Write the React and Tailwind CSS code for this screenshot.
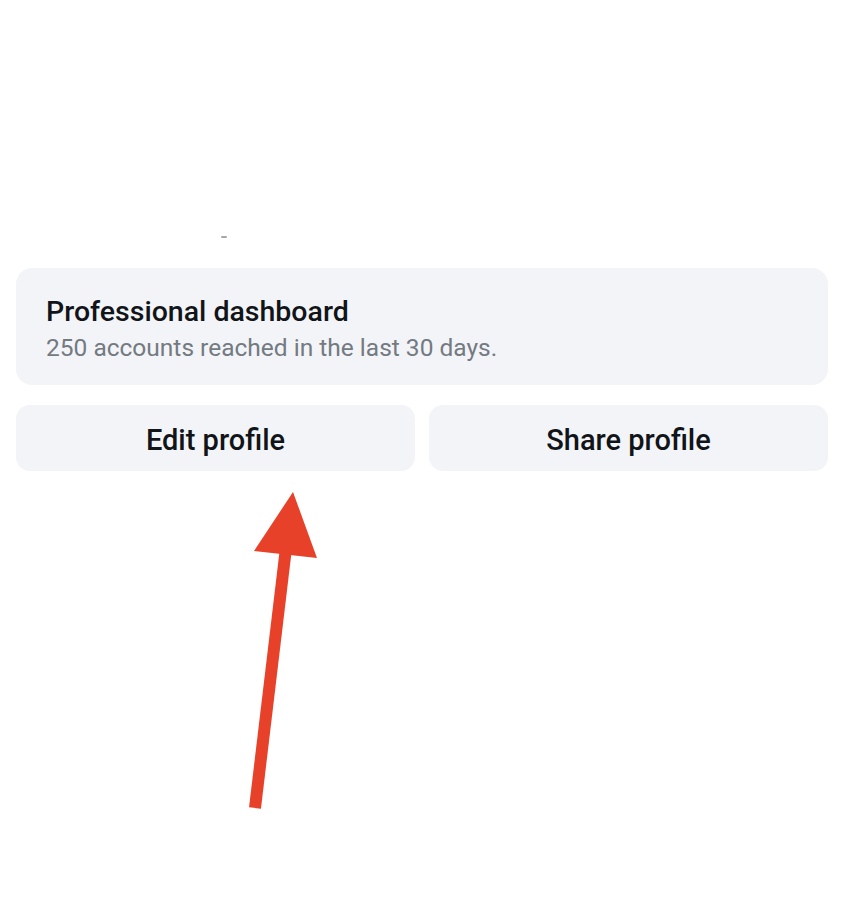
const font = { fontFamily: "Roboto, 'Noto Sans', sans-serif" };

export default function App() {
  return (
    <div className="w-[854px] h-[923px] bg-white relative" style={font}>
      <div className="h-[268px] relative">
        <span className="absolute left-[221px] top-[236px] w-[6px] h-[2px] bg-[#a4a9ae] rounded-full" />
      </div>
      <div className="pl-4 pr-[26px] flex flex-col gap-5">
        <div className="bg-[#f3f4f7] rounded-[16px] h-[117px] pl-[30px] pt-[27px]">
          <div className="text-[28.5px] leading-[34px] font-medium text-[#111418]">
            Professional dashboard
          </div>
          <div className="text-[24.5px] leading-[38px] text-[#737a82]">
            250 accounts reached in the last 30 days.
          </div>
        </div>
        <div className="grid grid-cols-2 gap-[14px]">
          <button className="h-[66px] pt-[5px] rounded-[14px] bg-[#f3f4f7] text-[29px] font-medium text-[#111418]">
            Edit profile
          </button>
          <button className="h-[66px] pt-[5px] rounded-[14px] bg-[#f3f4f7] text-[29px] font-medium text-[#111418]">
            Share profile
          </button>
        </div>
      </div>
      <svg className="absolute left-0 top-0" width="854" height="923" viewBox="0 0 854 923">
        <line x1="255" y1="808" x2="286" y2="548" stroke="#e8412a" strokeWidth="12" />
        <polygon points="254,551 293,492 317,558" fill="#e8412a" />
      </svg>
    </div>
  );
}
